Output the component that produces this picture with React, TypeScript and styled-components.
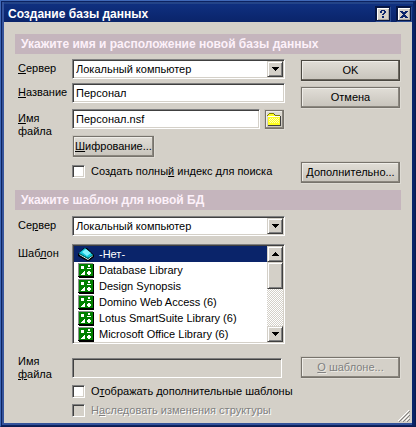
import React, { useId, useState } from "react";
import styled, { createGlobalStyle, css } from "styled-components";

const face = "#d4d0c8";
const shade = "#808080";
const dark = "#404040";
const navy = "#0a246a";

const GlobalStyle = createGlobalStyle`
  *, *::before, *::after { box-sizing: border-box; }
  body { margin: 0; background: ${face}; }
  body, button, input, select {
    font-family: "Liberation Sans", Arial, sans-serif;
    font-size: 11px;
    line-height: 13px;
    color: #000;
  }
`;

const sunken = css`
  border: 1px solid;
  border-color: ${shade} #fff #fff ${shade};
  box-shadow: inset 1px 1px 0 ${dark}, inset -1px -1px 0 ${face};
`;

const raised = css`
  border: 1px solid;
  border-color: ${face} ${dark} ${dark} ${face};
  box-shadow: inset 1px 1px 0 #fff, inset -1px -1px 0 ${shade};
  background: ${face};
`;

const Dialog = styled.main`
  display: flex;
  flex-direction: column;
  min-height: 100vh;
  padding: 1px;
  background: ${face};
  border: 1px solid;
  border-color: #3f68b8 #0a1c50 #0a1c50 #3f68b8;
  box-shadow: inset 0 0 0 1px #0c2260, inset -3px 0 0 ${navy},
    inset 3px 3px 0 #34539b, inset 0 -3px 0 #34539b;
`;

const TitleBar = styled.header`
  display: flex;
  align-items: center;
  height: 20px;
  padding: 2px 1px 0 4px;
  margin: 0 1px 0 2px;
  background: linear-gradient(#0f3080, #0a246a);
  border-top: 2px solid #234488;
`;

const Title = styled.h1`
  flex: 1;
  margin: 0;
  font-size: 12px;
  line-height: 16px;
  color: #fff;
  white-space: nowrap;
`;

const CaptionButtons = styled.div`
  display: flex;
  gap: 5px;
`;

const CaptionButton = styled.button`
  display: grid;
  place-items: center;
  width: 16px;
  height: 16px;
  padding: 0;
  border: 1px solid;
  border-color: #061644 #2c4c92 #2c4c92 #061644;
  background: ${face};
  box-shadow: inset 0 0 0 1px #061644, inset 2px 2px 0 #fff, inset -2px -2px 0 #a8a49c;
`;

const Body = styled.form`
  flex: 1;
  display: flex;
  flex-direction: column;
  margin: 0 2px 2px;
  padding: 12px 11px 5px;
  background: ${face};
`;

const Band = styled.h2`
  margin: 0;
  padding: 0 6px;
  height: 20px;
  font-size: 12px;
  line-height: 20px;
  color: #fdf1fa;
  background: #c5b5bd;
  white-space: nowrap;
`;

const Section = styled.div<{ $last?: boolean }>`
  display: flex;
  gap: 15px;
  padding: ${(p) => (p.$last ? "6px 0 0" : "5px 0 6px")};
`;

const Fields = styled.div`
  flex: 1;
  min-width: 0;
  display: flex;
  flex-direction: column;
`;

const Commands = styled.div`
  flex: none;
  width: 101px;
  display: flex;
  flex-direction: column;
  gap: 4px;
`;

const Row = styled.div<{ $gap?: number; $centered?: boolean }>`
  display: grid;
  grid-template-columns: 57px minmax(0, 1fr);
  align-items: ${(p) => (p.$centered ? "center" : "start")};
  margin-bottom: ${(p) => p.$gap ?? 0}px;
`;

const Caption = styled.label<{ $top?: number }>`
  padding: ${(p) => p.$top ?? 3}px 0 0 3px;
  white-space: nowrap;
`;

const Indented = styled.div<{ $gap?: number }>`
  display: flex;
  padding-left: 57px;
  margin-bottom: ${(p) => p.$gap ?? 0}px;
`;

const TextBox = styled.input`
  ${sunken}
  width: 100%;
  min-width: 0;
  height: 20px;
  padding: 0 3px;
  background: #fff;
  border-radius: 0;
  &:focus { outline: none; }
`;

const TemplateFile = styled(TextBox)`
  width: calc(100% - 3px);
  &:disabled {
    background: ${face};
    box-shadow: inset 1px 1px 0 ${dark};
  }
`;

const Combo = styled.div`
  ${sunken}
  display: grid;
  height: 20px;
  padding: 1px;
  background: #fff;
`;

const Select = styled.select`
  grid-area: 1 / 1;
  width: 100%;
  appearance: none;
  border: 0;
  padding: 0 18px 0 2px;
  background: transparent;
  &:focus { outline: none; }
`;

const ComboArrow = styled.span`
  ${raised}
  grid-area: 1 / 1;
  justify-self: end;
  width: 16px;
  display: grid;
  place-items: center;
  pointer-events: none;
`;

const FileStack = styled.div`
  display: flex;
  flex-direction: column;
  align-items: flex-start;
  gap: 5px;
`;

const FileLine = styled.div`
  display: flex;
  gap: 4px;
  width: 100%;
`;

const PushButton = styled.button<{ $primary?: boolean }>`
  height: 23px;
  padding: 0 4px;
  white-space: nowrap;
  border: 1px solid;
  border-color: #c8c4bc #dedbd4 #dedbd4 #c8c4bc;
  border-radius: 0;
  background: linear-gradient(#e2dfd8, #c6c2ba);
  box-shadow: inset 0 0 0 1px ${(p) => (p.$primary ? "#4a4740" : "#77736c")},
    inset -2px -2px 0 ${(p) => (p.$primary ? "#6a665e" : "#8a867e")},
    inset 2px 2px 0 #efede8;
  &:disabled {
    color: ${shade};
    background: ${face};
    text-shadow: 1px 1px 0 #eceae4;
  }
`;

const AdvancedButton = styled(PushButton)`
  margin-top: auto;
`;

const TemplateButton = styled(PushButton)`
  margin-top: auto;
  margin-bottom: 38px;
`;

const EncryptButton = styled(PushButton)`
  padding: 0 2px;
`;

const FolderButton = styled(PushButton)`
  flex: none;
  display: grid;
  place-items: center;
  width: 21px;
  height: 21px;
  padding: 0;
`;

const CheckLine = styled.label<{ $disabled?: boolean }>`
  display: flex;
  align-items: center;
  gap: 6px;
  height: 13px;
  white-space: nowrap;
  ${(p) => p.$disabled && css`color: ${shade}; text-shadow: 1px 1px 0 #fff;`}
`;

const Tick = styled.input`
  ${sunken}
  appearance: none;
  flex: none;
  width: 13px;
  height: 13px;
  margin: 0;
  background: #fff;
  &:checked { background: radial-gradient(circle, #000 0 3px, #fff 3px); }
  &:disabled { background: ${face}; }
`;

const ListFrame = styled.div`
  ${sunken}
  display: flex;
  height: 100px;
  padding: 1px;
  background: #fff;
`;

const List = styled.ul`
  flex: 1;
  min-width: 0;
  margin: 0;
  padding: 0;
  list-style: none;
  overflow: hidden;
`;

const Option = styled.li<{ $selected: boolean }>`
  display: flex;
  align-items: center;
  gap: 5px;
  height: 16px;
  padding-left: 4px;
  white-space: nowrap;
  color: ${(p) => (p.$selected ? "#fff" : "#000")};
  background: ${(p) => (p.$selected ? navy : "transparent")};
`;

const ScrollBar = styled.div`
  flex: none;
  width: 16px;
  display: flex;
  flex-direction: column;
  background: repeating-conic-gradient(#fff 0 25%, ${face} 0 50%) 0 0 / 2px 2px;
`;

const ScrollButton = styled.button`
  ${raised}
  display: grid;
  place-items: center;
  height: 16px;
  padding: 0;
`;

const Thumb = styled.div`
  ${raised}
  height: 27px;
  margin-bottom: auto;
`;

const Drawing = styled.svg`
  display: block;
  flex: none;
`;

const Grip = styled(Drawing)`
  position: absolute;
  right: 6px;
  bottom: 5px;
`;

const Shell = styled.div`
  position: relative;
`;

const Arrow = ({ up }: { up?: boolean }) => (
  <Drawing width="7" height="4" shapeRendering="crispEdges" aria-hidden="true">
    <path d={up ? "M3 0h1v1h1v1h1v1h1v1H0V3h1V2h1V1h1z" : "M0 0h7v1H6v1H5v1H4v1H3V3H2V2H1V1H0z"} />
  </Drawing>
);

const HelpIcon = () => (
  <Drawing width="8" height="8" shapeRendering="crispEdges" aria-hidden="true">
    <path fill={navy} d="M2 0h4v1h1v2H6v1H5v1H3V4h1V3h1V1H3v2H1V1h1zM3 6h2v2H3z" />
  </Drawing>
);

const CloseIcon = () => (
  <Drawing width="8" height="7" shapeRendering="crispEdges" aria-hidden="true">
    <path
      fill={navy}
      d="M0 0h3v1h2V0h3v1H7v1H6v1H5v1h1v1h1v1h1v1H5V6H3v1H0V6h1V5h1V4h1V3H2V2H1V1H0z"
    />
  </Drawing>
);

const FolderIcon = () => (
  <Drawing width="15" height="13" shapeRendering="crispEdges" aria-hidden="true">
    <path fill="#808000" d="M2 0h5v1h1v1h5v1h1v9H1V3H0V2h1V1h1z" />
    <path fill="#ffff20" d="M2 1h5v1h1v1H1V2h1zM1 4h12v8H1z" />
    <path fill="#fff" d="M1 3h12v1H1z" />
    <path
      fill="#ffffb4"
      d="M3 5h1v1H3zM5 5h1v1H5zM7 5h1v1H7zM9 5h1v1H9zM11 5h1v1h-1zM2 6h1v1H2zM4 6h1v1H4zM6 6h1v1H6zM8 6h1v1H8zM10 6h1v1h-1zM3 7h1v1H3zM5 7h1v1H5zM7 7h1v1H7zM9 7h1v1H9zM11 7h1v1h-1zM2 8h1v1H2zM4 8h1v1H4zM6 8h1v1H6zM8 8h1v1H8zM10 8h1v1h-1zM3 9h1v1H3zM5 9h1v1H5zM7 9h1v1H7zM9 9h1v1H9zM11 9h1v1h-1z"
    />
    <path fill="#404040" d="M7 1h1v1H7zM13 3h1v9h-1zM1 12h13v1H1z" />
  </Drawing>
);

const BookIcon = () => (
  <Drawing width="16" height="16" aria-hidden="true">
    <path fill="#000" d="M0 8 6 2h3l7 7v2l-5 4H9L0 10z" />
    <path fill="#10c8dc" d="M1 7 7 2l8 7-5 3z" />
    <path fill="#7ff4ff" d="m4 6 4-3 5 4-4 3z" />
    <path stroke="#fff" fill="none" d="m1.500 8.500 8.500 5 5-4" />
    <path stroke="#008080" fill="none" d="m1 7.500 9 5 5-3.500" />
  </Drawing>
);

const TemplateIcon = () => (
  <Drawing width="16" height="16" shapeRendering="crispEdges" aria-hidden="true">
    <path fill="#000" d="M0 2h16v14H1v-1H0z" />
    <path fill="#909090" d="M0 1h15v1H1v12H0z" />
    <path fill="#008000" d="M1 2h14v12H1z" />
    <path
      fill="#fff"
      d="M3 4h3v3H3zM10 3h2v2h-2zM9 6h4v1H9zM6 9h1v4H3v-1h1v-1h1v-1h1zM10 9h2v1h1v2h-1v1h-2v-1H9v-2h1z"
    />
  </Drawing>
);

const templates = [
  "-Нет-",
  "Database Library",
  "Design Synopsis",
  "Domino Web Access (6)",
  "Lotus SmartSuite Library (6)",
  "Microsoft Office Library (6)",
];

const TemplateList = ({ labelledBy }: { labelledBy: string }) => {
  const [selected, setSelected] = useState(0);
  return (
    <ListFrame>
      <List role="listbox" aria-labelledby={labelledBy} tabIndex={-1}>
        {templates.map((name, i) => (
          <Option
            key={name}
            role="option"
            aria-selected={i === selected}
            $selected={i === selected}
            onClick={() => setSelected(i)}
          >
            {i === 0 ? <BookIcon /> : <TemplateIcon />}
            {name}
          </Option>
        ))}
      </List>
      <ScrollBar>
        <ScrollButton type="button" aria-label="Вверх"><Arrow up /></ScrollButton>
        <Thumb />
        <ScrollButton type="button" aria-label="Вниз"><Arrow /></ScrollButton>
      </ScrollBar>
    </ListFrame>
  );
};

const ServerCombo = ({ id }: { id: string }) => (
  <Combo>
    <Select id={id}>
      <option>Локальный компьютер</option>
    </Select>
    <ComboArrow><Arrow /></ComboArrow>
  </Combo>
);

export default function App() {
  const id = useId();
  return (
    <Shell>
      <GlobalStyle />
      <Dialog>
        <TitleBar>
          <Title>Создание базы данных</Title>
          <CaptionButtons>
            <CaptionButton type="button" aria-label="Справка"><HelpIcon /></CaptionButton>
            <CaptionButton type="button" aria-label="Закрыть"><CloseIcon /></CaptionButton>
          </CaptionButtons>
        </TitleBar>
        <Body onSubmit={(e) => e.preventDefault()}>
          <Band>Укажите имя и расположение новой базы данных</Band>
          <Section>
            <Fields>
              <Row $gap={4}>
                <Caption htmlFor={`${id}server`}><u>С</u>ервер</Caption>
                <ServerCombo id={`${id}server`} />
              </Row>
              <Row $gap={6}>
                <Caption htmlFor={`${id}name`}><u>Н</u>азвание</Caption>
                <TextBox id={`${id}name`} defaultValue="Персонал" />
              </Row>
              <Row $gap={7}>
                <Caption htmlFor={`${id}file`}><u>И</u>мя<br />файла</Caption>
                <FileStack>
                  <FileLine>
                    <TextBox id={`${id}file`} defaultValue="Персонал.nsf" />
                    <FolderButton type="button" aria-label="Обзор"><FolderIcon /></FolderButton>
                  </FileLine>
                  <EncryptButton type="button"><u>Ш</u>ифрование...</EncryptButton>
                </FileStack>
              </Row>
              <Indented $gap={6}>
                <CheckLine>
                  <Tick type="checkbox" />
                  <span>Создать полны<u>й</u> индекс для поиска</span>
                </CheckLine>
              </Indented>
            </Fields>
            <Commands>
              <PushButton $primary type="submit">OK</PushButton>
              <PushButton type="button">Отмена</PushButton>
              <AdvancedButton type="button"><u>Д</u>ополнительно...</AdvancedButton>
            </Commands>
          </Section>
          <Band>Укажите шаблон для новой БД</Band>
          <Section $last>
            <Fields>
              <Row $gap={8}>
                <Caption htmlFor={`${id}source`}>Се<u>р</u>вер</Caption>
                <ServerCombo id={`${id}source`} />
              </Row>
              <Row $gap={11}>
                <Caption as="span" id={`${id}list`}>Шаб<u>л</u>он</Caption>
                <TemplateList labelledBy={`${id}list`} />
              </Row>
              <Row $gap={4} $centered>
                <Caption htmlFor={`${id}template`} $top={0}>Имя<br /><u>ф</u>айла</Caption>
                <TemplateFile id={`${id}template`} disabled />
              </Row>
              <Indented $gap={6}>
                <CheckLine>
                  <Tick type="checkbox" />
                  <span>О<u>т</u>ображать дополнительные шаблоны</span>
                </CheckLine>
              </Indented>
              <Indented>
                <CheckLine $disabled>
                  <Tick type="checkbox" disabled />
                  <span>Н<u>а</u>следовать изменения структуры</span>
                </CheckLine>
              </Indented>
            </Fields>
            <Commands>
              <TemplateButton type="button" disabled><u>О</u> шаблоне...</TemplateButton>
            </Commands>
          </Section>
        </Body>
      </Dialog>
      <Grip width="12" height="12" aria-hidden="true">
        <path stroke="#fff" d="M0 11 11 0M4 11l7-7M8 11l3-3" />
        <path stroke="#808080" d="M1 12 12 1M5 12l7-7M9 12l3-3" />
      </Grip>
    </Shell>
  );
}
